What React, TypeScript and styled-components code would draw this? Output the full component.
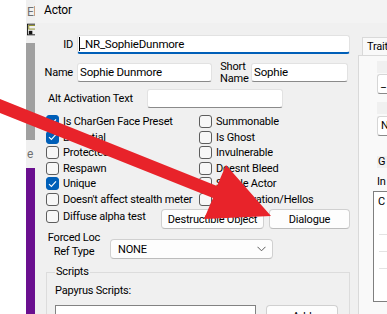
import * as React from 'react';
import styled, { createGlobalStyle } from 'styled-components';

const GlobalStyle = createGlobalStyle`
  html, body {
    margin: 0;
    padding: 0;
    background: #fff;
  }
  body {
    font-family: Roboto, "Liberation Sans", sans-serif;
    font-size: 11px;
    letter-spacing: -0.2px;
    color: #000;
  }
  * {
    box-sizing: border-box;
  }
`;

const Page = styled.div`
  position: relative;
  display: flex;
  width: 387px;
  height: 314px;
  overflow: hidden;
  background: #fff;
`;

const Gutter = styled.div`
  width: 26px;
  flex: none;
`;

const Strip = styled.div`
  width: 9px;
  flex: none;
  display: flex;
  flex-direction: column;
  overflow: hidden;
`;

const StripPart = styled.div<{ $h?: number; $bg: string }>`
  height: ${(p) => (p.$h ? `${p.$h}px` : 'auto')};
  flex: ${(p) => (p.$h ? 'none' : '1')};
  background: ${(p) => p.$bg};
  color: #707070;
  font-size: 12px;
  line-height: 14px;
  padding-left: 1px;
  white-space: nowrap;
  display: flex;
  align-items: center;
`;

const Dialog = styled.div`
  flex: 1;
  display: flex;
  flex-direction: column;
  background: #f0f0f0;
`;

const TitleBar = styled.div`
  height: 23px;
  flex: none;
  background: #f3f3f3;
  padding: 3px 0 0 9px;
  line-height: 15px;
  font-size: 12px;
`;

const Body = styled.div`
  flex: 1;
  display: flex;
  min-height: 0;
`;

const Main = styled.div`
  width: 323px;
  flex: none;
  display: flex;
  flex-direction: column;
  padding-top: 12px;
`;

const FieldRow = styled.div<{ $top?: number }>`
  display: flex;
  align-items: center;
  height: 19px;
  margin-top: ${(p) => p.$top ?? 0}px;
`;

const FieldLabel = styled.div<{ $w: number; $align?: string; $pl?: number }>`
  width: ${(p) => p.$w}px;
  flex: none;
  text-align: ${(p) => p.$align ?? 'right'};
  padding-right: ${(p) => (p.$align === 'left' ? 0 : 4)}px;
  padding-left: ${(p) => p.$pl ?? 0}px;
  white-space: nowrap;
`;

const TextBox = styled.div<{ $w: number; $focused?: boolean; $ml?: number }>`
  width: ${(p) => p.$w}px;
  height: 19px;
  flex: none;
  margin-left: ${(p) => p.$ml ?? 0}px;
  background: #fff;
  border: 1px solid #e2e2e2;
  border-bottom: ${(p) => (p.$focused ? '2px solid #005fb8' : '1px solid #8a8a8a')};
  border-radius: 3px;
  padding: 0 2px;
  line-height: 17px;
  font-size: 11.5px;
  white-space: nowrap;
  overflow: hidden;
`;

const Caret = styled.span`
  display: inline-block;
  width: 1px;
  height: 14px;
  background: #000;
  vertical-align: -3px;
  margin-left: -1px;
`;

const StackLabel = styled.div<{ $w: number; $ml: number; $lh: number }>`
  width: ${(p) => p.$w}px;
  flex: none;
  margin-left: ${(p) => p.$ml}px;
  text-align: center;
  line-height: ${(p) => p.$lh}px;
  white-space: nowrap;
`;

const CheckGrid = styled.div`
  display: grid;
  grid-template-columns: 153px 1fr;
  grid-auto-rows: 15.5px;
  margin-top: 6px;
  padding-left: 11px;
`;

const CheckItem = styled.label<{ $w?: number }>`
  display: flex;
  align-items: center;
  gap: 4px;
  height: 15.5px;
  white-space: nowrap;
  width: ${(p) => (p.$w ? `${p.$w}px` : 'auto')};
  flex: none;
`;

const Box = styled.span<{ $checked?: boolean }>`
  width: 13px;
  height: 13px;
  flex: none;
  border-radius: 3px;
  border: 1px solid ${(p) => (p.$checked ? '#005fb8' : '#5d5d5d')};
  background: ${(p) => (p.$checked ? '#005fb8' : '#f7f7f7')};
  display: flex;
  align-items: center;
  justify-content: center;
`;

const ActionRow = styled.div`
  display: flex;
  align-items: flex-start;
  margin-top: 2px;
  padding-left: 11px;
`;

const Button = styled.div<{ $w: number; $ml?: number; $h?: number }>`
  width: ${(p) => p.$w}px;
  height: ${(p) => p.$h ?? 20}px;
  flex: none;
  margin-left: ${(p) => p.$ml ?? 0}px;
  background: #fdfdfd;
  border: 1px solid #d0d0d0;
  border-bottom-color: #bcbcbc;
  border-radius: 4px;
  display: flex;
  align-items: center;
  justify-content: center;
  white-space: nowrap;
`;

const LocRow = styled.div`
  display: flex;
  align-items: flex-start;
  margin-top: 2px;
`;

const Select = styled.div`
  width: 163px;
  height: 20px;
  flex: none;
  margin: 8px 0 0 6px;
  background: #fdfdfd;
  border: 1px solid #d0d0d0;
  border-bottom-color: #bcbcbc;
  border-radius: 4px;
  display: flex;
  align-items: center;
  justify-content: space-between;
  padding: 0 6px 0 7px;
`;

const Group = styled.fieldset`
  margin: 6px 0 0 11px;
  width: 304px;
  border: 1px solid #dcdcdc;
  padding: 0 0 0 8px;
  min-height: 80px;
`;

const GroupTitle = styled.legend`
  padding: 0 1px;
  line-height: 14px;
`;

const GroupCaption = styled.div`
  margin-top: 5px;
  line-height: 14px;
`;

const GroupRow = styled.div`
  display: flex;
  align-items: flex-start;
  margin-top: 7px;
`;

const ScriptList = styled.div`
  width: 201px;
  height: 60px;
  flex: none;
  background: #fff;
  border: 1px solid #828282;
`;

const Traits = styled.div`
  flex: 1;
  display: flex;
  flex-direction: column;
  padding-top: 14px;
  min-width: 0;
`;

const Tab = styled.div`
  height: 18px;
  margin-left: 4px;
  background: #f9f9f9;
  border: 1px solid #d9d9d9;
  border-bottom: none;
  padding: 0 0 0 4px;
  line-height: 17px;
  white-space: nowrap;
`;

const TabPanel = styled.div`
  flex: 1;
  background: #f9f9f9;
  border-left: 1px solid #d9d9d9;
  border-top: 1px solid #d9d9d9;
  padding-left: 14px;
  display: flex;
  flex-direction: column;
`;

const Band = styled.div<{ $top: number }>`
  height: 12px;
  margin: ${(p) => p.$top}px 0 0 4px;
  background: #f0f0f0;
  line-height: 12px;
  padding-left: 1px;
`;

const PanelInput = styled.div<{ $top: number }>`
  height: 20px;
  margin: ${(p) => p.$top}px 0 0 4px;
  background: #fff;
  border: 1px solid #d6d6d6;
  border-bottom-color: #8a8a8a;
  border-radius: 3px 0 0 3px;
  border-right: none;
  padding-left: 3px;
  line-height: 18px;
`;

const PanelText = styled.div`
  margin: 7px 0 0 4px;
  line-height: 14px;
`;

const TraitList = styled.div`
  height: 111px;
  margin-top: 2px;
  background: #fff;
  border: 1px solid #7f7f7f;
  border-right: none;
  display: flex;
  flex-direction: column;
`;

const TraitRow = styled.div<{ $h: number; $first?: boolean }>`
  height: ${(p) => p.$h}px;
  flex: none;
  border-top: ${(p) => (p.$first ? 'none' : '1px solid #e3e3e3')};
  margin-left: ${(p) => (p.$first ? 0 : 5)}px;
  padding: 3px 0 0 4px;
  line-height: 14px;
`;

const Overlay = styled.svg`
  position: absolute;
  left: 0;
  top: 0;
  pointer-events: none;
`;

const Check = ({ checked }: { checked?: boolean }) => (
  <Box $checked={checked}>
    {checked && (
      <svg width="9" height="8" viewBox="0 0 9 8">
        <polyline points="1,4.2 3.4,6.4 8,1.4" fill="none" stroke="#fff" strokeWidth="1.1" />
      </svg>
    )}
  </Box>
);

const flags: [string, boolean, string][] = [
  ['Is CharGen Face Preset', true, 'Summonable'],
  ['Essential', true, 'Is Ghost'],
  ['Protected', false, 'Invulnerable'],
  ['Respawn', false, 'Doesnt Bleed'],
  ['Unique', true, 'Simple Actor'],
  ["Doesn't affect stealth meter", false, 'No Activation/Hellos'],
];

const App = () => {
  return (
    <Page>
      <GlobalStyle />
      <Gutter />
      <Strip>
        <StripPart $h={23} $bg="#f0f0f0">
          El
        </StripPart>
        <StripPart $h={13} $bg="#f0f0f0">
          <svg width="9" height="13" viewBox="0 0 9 13">
            <rect x="0.5" y="0.5" width="10" height="12" fill="none" stroke="#111" />
            <rect x="2" y="2" width="8" height="4" fill="none" stroke="#8a8a1a" />
            <rect x="2" y="8" width="4" height="4" fill="#111" />
          </svg>
        </StripPart>
        <StripPart $h={7} $bg="#f0f0f0" />
        <StripPart $h={97} $bg="#a0a0a0" />
        <StripPart $h={28} $bg="#f0f0f0">
          e
        </StripPart>
        <StripPart $bg="#6a0f8f" />
      </Strip>
      <Dialog>
        <TitleBar>Actor</TitleBar>
        <Body>
          <Main>
            <FieldRow>
              <FieldLabel $w={42}>ID</FieldLabel>
              <TextBox $w={273} $focused>
                <Caret />
                _NR_SophieDunmore
              </TextBox>
            </FieldRow>
            <FieldRow $top={9}>
              <FieldLabel $w={42}>Name</FieldLabel>
              <TextBox $w={135}>Sophie Dunmore</TextBox>
              <StackLabel $w={26} $ml={8} $lh={12}>
                Short
                <br />
                Name
              </StackLabel>
              <TextBox $w={97} $ml={5}>
                Sophie
              </TextBox>
            </FieldRow>
            <FieldRow $top={7}>
              <FieldLabel $w={112} $align="left" $pl={13}>
                Alt Activation Text
              </FieldLabel>
              <TextBox $w={136} />
            </FieldRow>
            <CheckGrid>
              {flags.map(([left, on, right]) => (
                <React.Fragment key={left}>
                  <CheckItem>
                    <Check checked={on} />
                    {left}
                  </CheckItem>
                  <CheckItem>
                    <Check />
                    {right}
                  </CheckItem>
                </React.Fragment>
              ))}
            </CheckGrid>
            <ActionRow>
              <CheckItem $w={115}>
                <Check />
                Diffuse alpha test
              </CheckItem>
              <Button $w={103}>Destructible Object</Button>
              <Button $w={81} $ml={5}>
                Dialogue
              </Button>
            </ActionRow>
            <LocRow>
              <StackLabel $w={60} $ml={9} $lh={14}>
                Forced Loc
                <br />
                Ref Type
              </StackLabel>
              <Select>
                NONE
                <svg width="9" height="6" viewBox="0 0 9 6">
                  <polyline points="0.5,0.8 4.5,4.8 8.5,0.8" fill="none" stroke="#5a5a5a" strokeWidth="1" />
                </svg>
              </Select>
            </LocRow>
            <Group>
              <GroupTitle>Scripts</GroupTitle>
              <GroupCaption>Papyrus Scripts:</GroupCaption>
              <GroupRow>
                <ScriptList />
                <Button $w={72} $h={23} $ml={10}>
                  Add
                </Button>
              </GroupRow>
            </Group>
          </Main>
          <Traits>
            <Tab>Traits</Tab>
            <TabPanel>
              <Band $top={5} />
              <PanelInput $top={1}>_</PanelInput>
              <Band $top={8} />
              <PanelInput $top={2}>N</PanelInput>
              <Band $top={20}>G</Band>
              <PanelText>In</PanelText>
              <TraitList>
                <TraitRow $h={42} $first>
                  C
                </TraitRow>
                <TraitRow $h={17} />
                <TraitRow $h={17} />
                <TraitRow $h={17} />
              </TraitList>
            </TabPanel>
          </Traits>
        </Body>
      </Dialog>
      <Overlay width="387" height="314" viewBox="0 0 387 314">
        <polygon
          points="0,99 217,186 226,165 271,216 204,219 213,198 0,113"
          fill="#e8232a"
        />
      </Overlay>
    </Page>
  );
};

export default App;
